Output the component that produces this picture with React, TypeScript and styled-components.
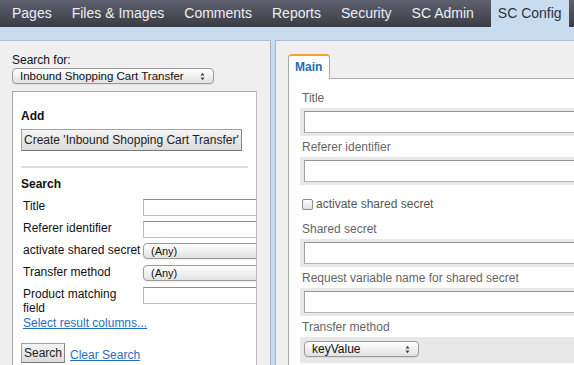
import { FC } from "react";
import styled, { createGlobalStyle } from "styled-components";

const GlobalStyle = createGlobalStyle`
  html, body {
    margin: 0;
    padding: 0;
    width: 574px;
    height: 365px;
    overflow: hidden;
    background: #c8dcf0;
    font-family: "Liberation Sans", Arial, sans-serif;
  }
  * {
    box-sizing: border-box;
  }
`;

const navItems = [
  "Pages",
  "Files & Images",
  "Comments",
  "Reports",
  "Security",
  "SC Admin",
  "SC Config",
];

const SelectArrows: FC = () => (
  <svg width="5" height="9" viewBox="0 0 5 9">
    <path d="M0.5 3.5 L2.5 0.8 L4.5 3.5 Z" fill="#444" />
    <path d="M0.5 5.5 L2.5 8.2 L4.5 5.5 Z" fill="#444" />
  </svg>
);

interface SelectProps {
  value: string;
  width: number;
  size?: number;
}

const Select: FC<SelectProps> = ({ value, width, size = 11 }) => (
  <SelectBox width={width} $size={size}>
    <span>{value}</span>
    <SelectArrows />
  </SelectBox>
);

const App: FC = () => {
  return (
    <>
      <GlobalStyle />
      <TopNav>
        {navItems.map((item) => (
          <NavItem key={item} $active={item === "SC Config"}>
            {item}
          </NavItem>
        ))}
      </TopNav>
      <Columns>
        <LeftPanel>
          <SmallLabel>Search for:</SmallLabel>
          <Select value="Inbound Shopping Cart Transfer" width={202} size={11.5} />
          <SearchBox>
            <Heading>Add</Heading>
            <GrayButton>Create 'Inbound Shopping Cart Transfer'</GrayButton>
            <Separator />
            <Heading $search>Search</Heading>
            <FilterRow>
              <FilterLabel>Title</FilterLabel>
              <TextInput />
            </FilterRow>
            <FilterRow>
              <FilterLabel>Referer identifier</FilterLabel>
              <TextInput />
            </FilterRow>
            <FilterRow>
              <FilterLabel>activate shared secret</FilterLabel>
              <Select value="(Any)" width={140} />
            </FilterRow>
            <FilterRow>
              <FilterLabel>Transfer method</FilterLabel>
              <Select value="(Any)" width={140} />
            </FilterRow>
            <FilterRow $tall>
              <FilterLabel>
                Product matching
                <br />
                field
              </FilterLabel>
              <TextInput />
            </FilterRow>
            <Link>Select result columns...</Link>
            <ButtonRow>
              <GrayButton $small>Search</GrayButton>
              <Link>Clear Search</Link>
            </ButtonRow>
          </SearchBox>
        </LeftPanel>
        <RightPanel>
          <Tab>Main</Tab>
          <TabContent>
            <FieldLabel>Title</FieldLabel>
            <FieldHolder>
              <WideInput />
            </FieldHolder>
            <FieldLabel>Referer identifier</FieldLabel>
            <FieldHolder>
              <WideInput />
            </FieldHolder>
            <CheckRow>
              <CheckBox />
              activate shared secret
            </CheckRow>
            <FieldLabel>Shared secret</FieldLabel>
            <FieldHolder>
              <WideInput />
            </FieldHolder>
            <FieldLabel>Request variable name for shared secret</FieldLabel>
            <FieldHolder>
              <WideInput />
            </FieldHolder>
            <FieldLabel>Transfer method</FieldLabel>
            <FieldHolder $select>
              <Select value="keyValue" width={115} size={12} />
            </FieldHolder>
          </TabContent>
        </RightPanel>
      </Columns>
    </>
  );
};

export default App;

const TopNav = styled.div`
  display: flex;
  align-items: stretch;
  height: 27px;
  padding-left: 5px;
  gap: 6px;
  background: linear-gradient(#5e616d, #3a3c45);
`;

const NavItem = styled.div<{ $active?: boolean }>`
  display: flex;
  align-items: center;
  padding: 0 7px 2px;
  font-size: 14px;
  color: ${(p) => (p.$active ? "#2e3440" : "#eceef2")};
  background: ${(p) => (p.$active ? "#c8dcf0" : "transparent")};

  &:last-child {
    margin-left: 4px;
  }
`;

const Columns = styled.div`
  display: flex;
  height: 338px;
  padding-top: 13px;
  background: #c8dcf0;
`;

const LeftPanel = styled.div`
  width: 271px;
  flex-shrink: 0;
  margin-right: 4px;
  padding: 12px 13px 0 12px;
  background: #efefef;
  border-top: 1px solid #a9bbd1;
  border-right: 1px solid #a9b6c6;
  overflow: hidden;
`;

const SmallLabel = styled.div`
  font-size: 12px;
  line-height: 14px;
  color: #111;
  margin-bottom: 1px;
`;

const SelectBox = styled.div<{ width: number; $size: number }>`
  display: flex;
  align-items: center;
  justify-content: space-between;
  flex-shrink: 0;
  width: ${(p) => p.width}px;
  height: 16px;
  padding: 0 8px 0 7px;
  font-size: ${(p) => p.$size}px;
  color: #111;
  background: linear-gradient(#ffffff, #f0f0f0 50%, #e2e2e2);
  border: 1px solid #9a9a9a;
  border-radius: 4px;
  box-shadow: 0 1px 0 rgba(0, 0, 0, 0.06);
  white-space: nowrap;
`;

const SearchBox = styled.div`
  margin-top: 7px;
  width: 245px;
  height: 300px;
  padding: 16px 8px 0;
  background: #fff;
  border: 1px solid #aaa;
  border-right-color: #bbb;
  overflow: hidden;
`;

const Heading = styled.div<{ $search?: boolean }>`
  font-size: 12px;
  font-weight: bold;
  line-height: 16px;
  color: #111;
  margin-top: ${(p) => (p.$search ? "8px" : "0")};
  margin-bottom: ${(p) => (p.$search ? "7px" : "5px")};
`;

const GrayButton = styled.div<{ $small?: boolean }>`
  display: inline-flex;
  align-items: center;
  justify-content: center;
  height: ${(p) => (p.$small ? "20px" : "22px")};
  padding: 0 2px;
  font-size: 12px;
  color: #222;
  background: linear-gradient(#f4f4f4, #dcdcdc);
  border: 1px solid #a0a0a0;
  border-bottom-color: #777;
  border-right-color: #888;
  white-space: nowrap;
`;

const Separator = styled.div`
  height: 2px;
  margin: 15px 0 0 0;
  background: #dedede;
`;

const FilterRow = styled.div<{ $tall?: boolean }>`
  display: flex;
  align-items: flex-start;
  height: ${(p) => (p.$tall ? "29px" : "22px")};
  padding-left: 2px;
`;

const FilterLabel = styled.div`
  width: 120px;
  flex-shrink: 0;
  font-size: 12px;
  line-height: 14px;
  color: #111;
  white-space: nowrap;
`;

const TextInput = styled.div`
  flex-shrink: 0;
  width: 140px;
  height: 17px;
  background: #fff;
  border: 1px solid #bbb;
  border-top-color: #8f8f8f;
`;

const Link = styled.a`
  display: block;
  font-size: 12px;
  line-height: 14px;
  color: #1f6fc2;
  text-decoration: underline;
  padding-left: 2px;
  cursor: pointer;
`;

const ButtonRow = styled.div`
  display: flex;
  align-items: flex-end;
  gap: 3px;
  margin-top: 13px;

  ${Link} {
    padding-bottom: 1px;
  }
`;

const RightPanel = styled.div`
  flex: 1;
  min-width: 0;
  padding: 13px 0 0 12px;
  background: #efefef;
  border-top: 1px solid #a9bbd1;
  border-left: 1px solid #a9b6c6;
  overflow: hidden;
`;

const Tab = styled.div`
  display: inline-flex;
  align-items: center;
  height: 25px;
  padding: 0 7px 2px 6px;
  margin-bottom: -1px;
  position: relative;
  font-size: 12px;
  font-weight: bold;
  color: #1b6bb7;
  background: #fff;
  border: 1px solid #aaa;
  border-top: 2px solid #f3a42c;
  border-bottom: none;
  border-radius: 4px 4px 0 0;
`;

const TabContent = styled.div`
  width: 340px;
  height: 300px;
  padding: 12px 0 0 11px;
  background: #fff;
  border: 1px solid #aaa;
`;

const FieldLabel = styled.div`
  font-size: 12px;
  line-height: 14px;
  color: #666;
  padding-left: 2px;
  margin-bottom: 3px;
`;

const FieldHolder = styled.div<{ $select?: boolean }>`
  height: ${(p) => (p.$select ? "26px" : "28px")};
  padding: ${(p) => (p.$select ? "4px 4px" : "3px 4px")};
  margin-bottom: 4px;
  background: #e8e8e8;
`;

const WideInput = styled.div`
  height: 22px;
  background: #fff;
  border: 1px solid #b5b5b5;
  border-top-color: #949494;
  border-left-color: #a0a0a0;
`;

const CheckRow = styled.div`
  display: flex;
  align-items: center;
  gap: 3px;
  height: 14px;
  margin: 12px 0 11px 2px;
  font-size: 12px;
  color: #555;
`;

const CheckBox = styled.span`
  display: inline-block;
  width: 11px;
  height: 11px;
  border: 1px solid #8d8d8d;
  border-radius: 2px;
  background: linear-gradient(#fdfdfd, #e4e4e4);
`;
